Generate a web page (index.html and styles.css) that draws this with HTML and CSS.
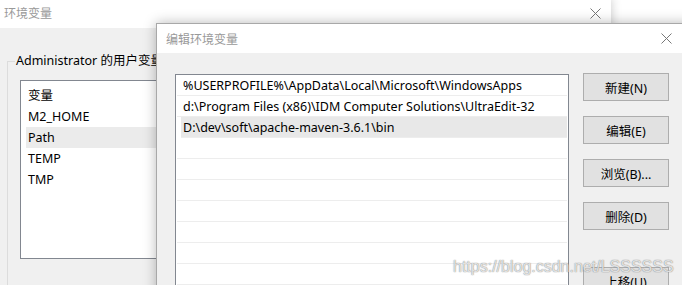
FILE: index.html
```html
<!DOCTYPE html>
<html lang="zh-CN">
<head>
    <meta charset="UTF-8">
    <title>编辑环境变量</title>
    <link rel="stylesheet" href="styles.css">
</head>
<body>
    <!-- back window: 环境变量 -->
    <div class="window back">
        <div class="titlebar">
            <span class="title">环境变量</span>
            <span class="close">
                <svg width="11" height="11" viewBox="0 0 11 11"><path d="M0.5 0.5L10.5 10.5M10.5 0.5L0.5 10.5" stroke="#777" stroke-width="1"/></svg>
            </span>
        </div>
        <div class="body">
            <div class="groupbox">
                <span class="legend">Administrator 的用户变量</span>
                <div class="listview">
                    <div class="lv-row">变量</div>
                    <div class="lv-row">M2_HOME</div>
                    <div class="lv-row selected">Path</div>
                    <div class="lv-row">TEMP</div>
                    <div class="lv-row">TMP</div>
                </div>
            </div>
        </div>
    </div>

    <!-- front window: 编辑环境变量 -->
    <div class="window front">
        <div class="titlebar">
            <span class="title">编辑环境变量</span>
            <span class="close">
                <svg width="11" height="11" viewBox="0 0 11 11"><path d="M0.5 0.5L10.5 10.5M10.5 0.5L0.5 10.5" stroke="#777" stroke-width="1"/></svg>
            </span>
        </div>
        <div class="body">
            <div class="pathlist">
                <div class="path-row">%USERPROFILE%\AppData\Local\Microsoft\WindowsApps</div>
                <div class="path-row">d:\Program Files (x86)\IDM Computer Solutions\UltraEdit-32</div>
                <div class="path-row selected">D:\dev\soft\apache-maven-3.6.1\bin</div>
                <div class="path-row"></div>
                <div class="path-row"></div>
                <div class="path-row"></div>
                <div class="path-row"></div>
                <div class="path-row"></div>
                <div class="path-row"></div>
                <div class="path-row"></div>
            </div>
            <div class="buttons">
                <button class="btn">新建(N)</button>
                <button class="btn">编辑(E)</button>
                <button class="btn">浏览(B)...</button>
                <button class="btn">删除(D)</button>
                <button class="btn spaced">上移(U)</button>
            </div>
        </div>
    </div>

    <div class="watermark">https://blog.csdn.net/LSSSSSS</div>
</body>
</html>
```

FILE: styles.css
```css
/* Basic styles */
body {
    margin: 0;
    width: 682px;
    height: 285px;
    overflow: hidden;
    position: relative;
    background-color: #fff;
    font-family: "Noto Sans", "Noto Sans CJK SC", sans-serif;
    font-size: 12.5px;
    color: #000;
}

/* windows on the desktop */
.window {
    position: absolute;
    background-color: #f0f0f0;
    display: flex;
    flex-direction: column;
}
.window.back {
    left: -8px;
    top: -2px;
    width: 619px;
    height: 300px;
    box-shadow: 0 0 10px rgba(0, 0, 0, 0.22);
}
.window.front {
    left: 156px;
    top: 23px;
    width: 560px;
    height: 300px;
    border: 1px solid #a8a8a8;
    box-shadow: 0 0 12px rgba(0, 0, 0, 0.28);
}

.titlebar {
    background-color: #fff;
    display: flex;
    align-items: center;
    justify-content: space-between;
    flex-shrink: 0;
}
.back .titlebar {
    height: 30px;
    padding: 0 10px 0 12px;
}
.front .titlebar {
    height: 29px;
    padding: 0 9px 0 9px;
}
.title {
    color: #999;
    font-size: 12px;
}
.close {
    display: flex;
}
.front .close {
    margin-right: 36px;
}

/* back window contents */
.back .body {
    padding: 33px 0 0 15px;
}
.groupbox {
    border-top: 1px solid #dcdcdc;
    border-left: 1px solid #dcdcdc;
    height: 260px;
    padding: 18px 0 0 12px;
    position: relative;
}
.legend {
    position: absolute;
    left: 7px;
    top: -9px;
    padding: 0 1px;
    line-height: 16px;
    background-color: #f0f0f0;
}
.listview {
    background-color: #fff;
    border: 1px solid #828790;
    height: 173px;
    padding: 4px 0 0 5px;
}
.lv-row {
    height: 21px;
    line-height: 22px;
    padding-left: 2px;
}
.lv-row.selected {
    background-color: #ebebeb;
}

/* front window contents */
.front .body {
    display: flex;
    padding: 21px 0 0 18px;
}
.pathlist {
    width: 390px;
    height: 240px;
    background-color: #fff;
    border: 1px solid #828790;
    padding: 0 1px;
}
.path-row {
    height: 20px;
    line-height: 22px;
    border-bottom: 1px solid #ededed;
    padding-left: 6px;
    white-space: nowrap;
}
.path-row.selected {
    background-color: #e8e8e8;
    margin-left: 4px;
    padding-left: 2px;
}

.buttons {
    display: flex;
    flex-direction: column;
    gap: 15px;
    margin-left: 14px;
    margin-top: -1px;
}
.btn {
    width: 86px;
    height: 28px;
    background-color: #e1e1e1;
    border: 1px solid #adadad;
    font-family: "Noto Sans", "Noto Sans CJK SC", sans-serif;
    font-size: 12.5px;
    color: #000;
    padding: 0;
}
.btn.spaced {
    margin-top: 22px;
}

.watermark {
    position: absolute;
    left: 453px;
    top: 258px;
    font-family: "Liberation Sans", Arial, sans-serif;
    font-size: 16px;
    color: rgba(255, 255, 255, 0.75);
    text-shadow: 0 0 1px rgba(110, 110, 110, 0.8), 0 0 1px rgba(110, 110, 110, 0.5);
}
```
